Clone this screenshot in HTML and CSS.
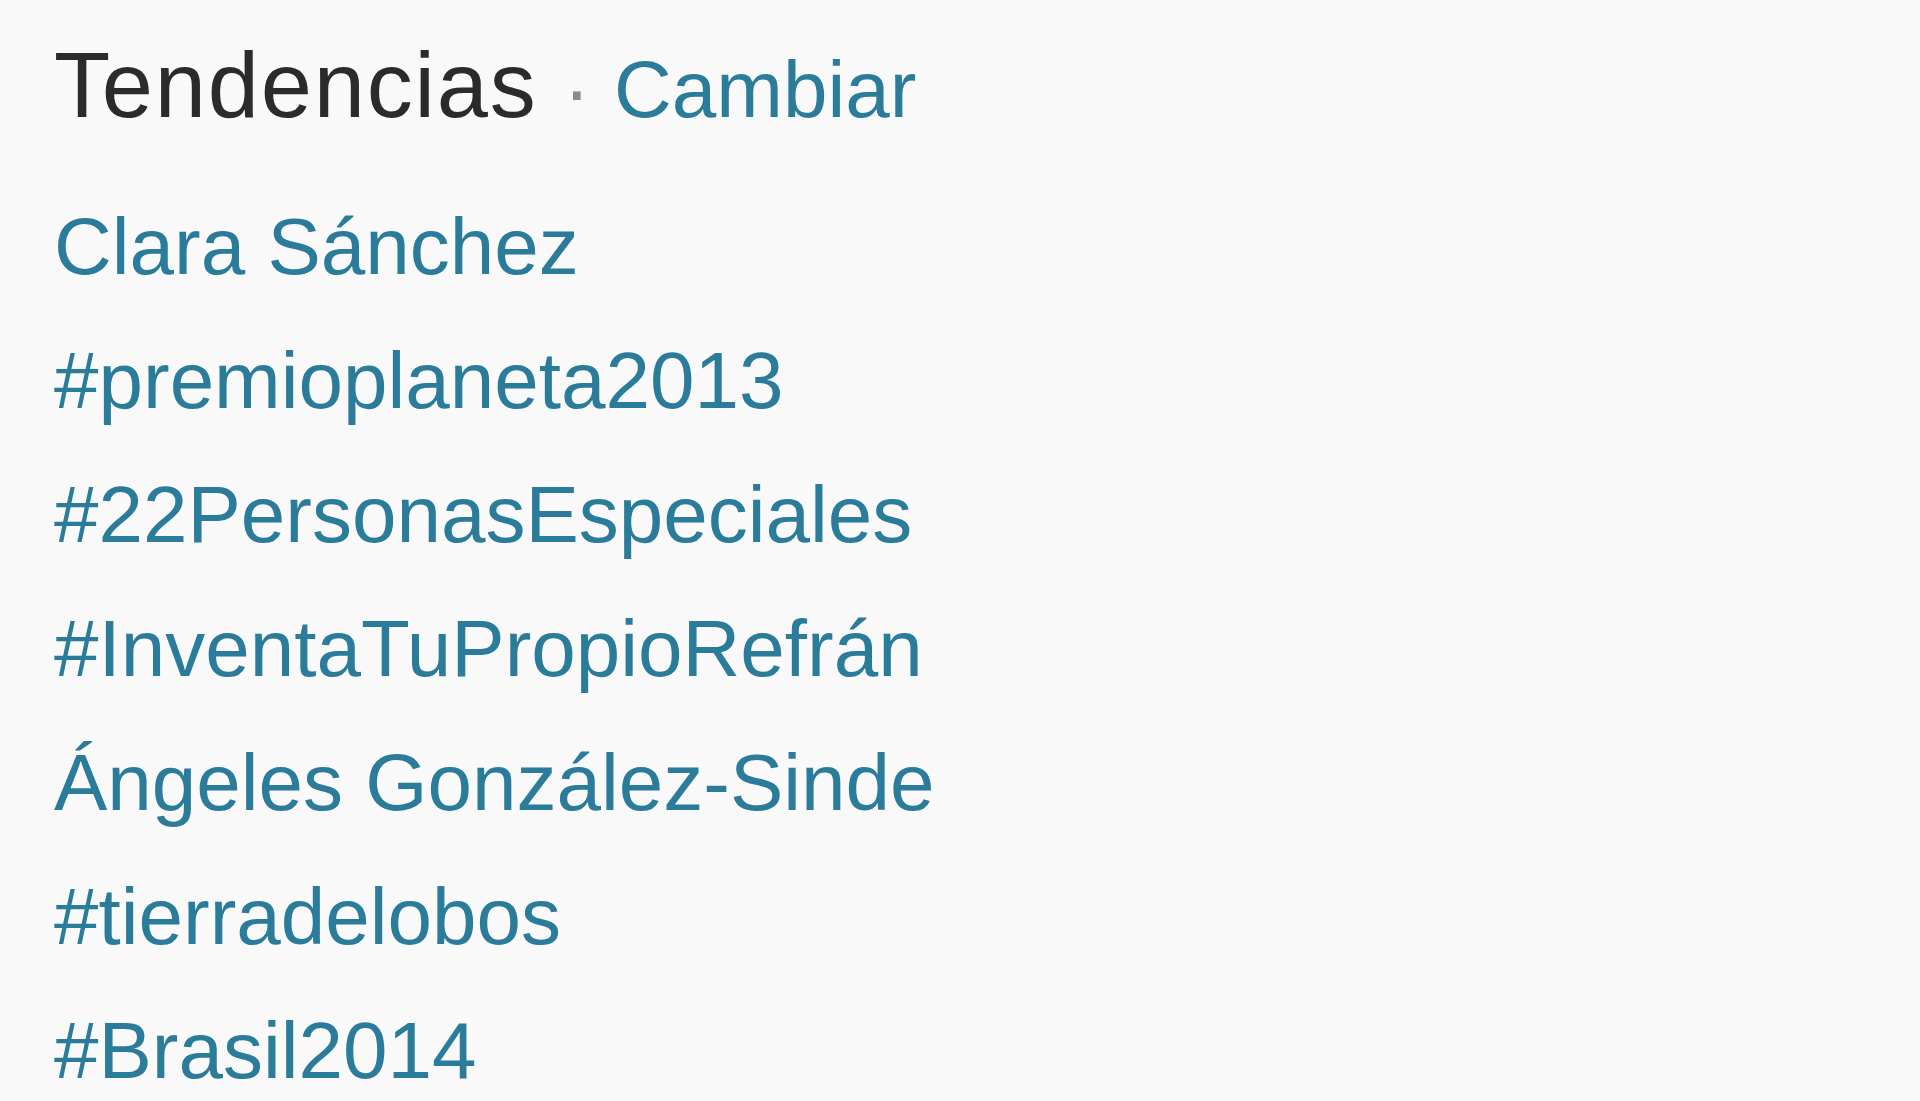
FILE: index.html
```html
<!DOCTYPE html>
<html lang="es">
<head>
    <meta charset="UTF-8">
    <meta name="viewport" content="width=device-width, initial-scale=1.0">
    <title>Tendencias</title>
    <link rel="stylesheet" href="styles.css">
</head>
<body>
    <div class="trends">
        <div class="trends-header">
            <h3>Tendencias</h3>
            <span class="dot">&middot;</span>
            <a href="#" class="change">Cambiar</a>
        </div>
        <ul class="trend-list">
            <li><a href="#">Clara Sánchez</a></li>
            <li><a href="#">#premioplaneta2013</a></li>
            <li><a href="#">#22PersonasEspeciales</a></li>
            <li><a href="#">#InventaTuPropioRefrán</a></li>
            <li><a href="#">Ángeles González-Sinde</a></li>
            <li><a href="#">#tierradelobos</a></li>
            <li><a href="#">#Brasil2014</a></li>
        </ul>
    </div>
</body>
</html>
```

FILE: styles.css
```css
body {
    margin: 0;
    background-color: #f9f9f9;
    font-family: "Liberation Sans", Arial, sans-serif;
    overflow: hidden;
}
.trends {
    padding: 39px 0 0 54px;
}
.trends-header {
    display: flex;
    align-items: baseline;
}
.trends-header h3 {
    margin: 0;
    font-size: 92px;
    font-weight: normal;
    line-height: 92px;
    letter-spacing: 1.8px;
    color: #2b2b2b;
}
.dot {
    font-size: 80px;
    color: #8a8a8a;
    margin: 0 24px 0 26px;
}
.change {
    font-size: 80px;
    color: #2b7b9b;
    text-decoration: none;
}
.trend-list {
    list-style: none;
    margin: 44px 0 0;
    padding: 0;
}
.trend-list li {
    font-size: 80px;
    line-height: 134px;
}
.trend-list a {
    color: #2b7b9b;
    text-decoration: none;
}
```
